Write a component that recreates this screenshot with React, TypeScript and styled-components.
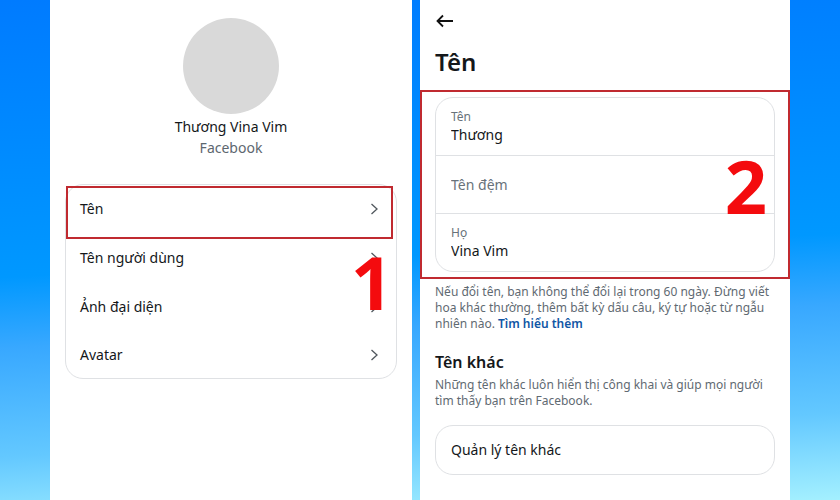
import React from "react";
import styled, { createGlobalStyle } from "styled-components";

const GlobalStyle = createGlobalStyle`
  *, *::before, *::after { box-sizing: border-box; }
  body {
    margin: 0;
    color: #14171a;
    font-family: "Noto Sans", sans-serif;
    font-size: 14px;
    line-height: 20px;
  }
  button, input { font: inherit; color: inherit; }
  h1, h2, p, ul { margin: 0; padding: 0; }
`;

const Page = styled.div`
  display: flex;
  gap: 8px;
  min-height: 100vh;
  padding: 0 50px;
  background: linear-gradient(177deg, #007bff 0%, #0098ff 51%, #38a8ff 64%, #63c8ff 84%, #a4f0ff 100%);
`;

const Panel = styled.section<{ $grow: number }>`
  flex: ${(p) => p.$grow} 1 0;
  min-width: 0;
  background: #fff;
`;

const Profile = styled.header`
  display: flex;
  flex-direction: column;
  align-items: center;
  padding: 18px 0 26px;
`;

const Avatar = styled.div`
  width: 96px;
  height: 96px;
  margin-bottom: 3px;
  border-radius: 50%;
  background: #d9d9d9;
`;

const Name = styled.p`
  font-size: 14px;
`;

const Network = styled.p`
  margin-top: 1px;
  color: #5d676f;
  font-size: 14px;
`;

const Card = styled.div`
  border: 1px solid #dfe1e4;
  border-radius: 18px;
`;

const Menu = styled(Card).attrs({ as: "ul" })`
  margin: 0 15px;
  list-style: none;
`;

const MenuButton = styled.button`
  display: flex;
  align-items: center;
  justify-content: space-between;
  width: 100%;
  height: 49px;
  padding: 0 15px 2px 14px;
  border: 0;
  background: none;
  text-align: left;
  cursor: pointer;
`;

const MenuItem = styled.li`
  position: relative;

  &:last-child ${MenuButton} {
    height: 46px;
    padding-bottom: 0;
  }
`;

const MenuHighlight = styled.div`
  position: absolute;
  inset: 1px 3px -5px 0;
  border: 2px solid #c02a30;
  pointer-events: none;
`;

const Step = styled.span`
  position: absolute;
  z-index: 1;
  color: #f40b0e;
  font: 700 74px/74px "Open Sans", sans-serif;
  pointer-events: none;
`;

const StepOne = styled(Step)`
  top: 60px;
  right: 3px;
`;

const StepTwo = styled(Step)`
  top: 57px;
  right: 21px;
`;

const TopBar = styled.header`
  padding: 11px 15px 0;
`;

const BackButton = styled.button`
  display: flex;
  padding: 0;
  border: 0;
  background: none;
  cursor: pointer;
`;

const Title = styled.h1`
  margin: 15px 0 13px;
  font-size: 24px;
  font-weight: 600;
  line-height: 31px;
`;

const NameFields = styled.form`
  position: relative;
  padding: 5px 13px;
  border: 2px solid #c02a30;
`;

const Field = styled.label`
  display: flex;
  flex-direction: column;
  justify-content: center;
  height: 57px;
  padding: 0 15px;

  & + & {
    height: 58px;
    border-top: 1px solid #dfe1e4;
  }
`;

const FieldLabel = styled.span`
  color: #68727a;
  font-size: 12px;
  line-height: 16px;
`;

const FieldInput = styled.input`
  width: 100%;
  height: 20px;
  padding: 0;
  border: 0;
  outline: 0;
  background: none;

  &::placeholder { color: #68727a; opacity: 1; }
`;

const Details = styled.div`
  padding: 5px 15px 0;
`;

const Note = styled.p`
  color: #5f6a72;
  font-size: 12px;
  line-height: 16px;
`;

const MoreLink = styled.a`
  color: #0f56a5;
  font-weight: 600;
  text-decoration: none;
`;

const Subtitle = styled.h2`
  margin: 18px 0 3px;
  font-size: 16px;
  font-weight: 600;
  line-height: 24px;
`;

const ManageButton = styled(Card).attrs({ as: "button", type: "button" })`
  width: 100%;
  height: 50px;
  margin-top: 16px;
  padding: 0 15px;
  background: none;
  text-align: left;
  cursor: pointer;
`;

const Chevron = () => (
  <svg width="12" height="14" viewBox="0 0 12 14" fill="none" stroke="#50575d" strokeWidth="1.3" aria-hidden="true">
    <path d="M2.5 2 L8 7 L2.5 12" />
  </svg>
);

const BackArrow = () => (
  <svg width="20" height="20" viewBox="0 0 20 20" fill="none" stroke="#111" strokeWidth="1.8" aria-hidden="true">
    <path d="M18 10 H3 M8 4.5 L2.5 10 L8 15.5" />
  </svg>
);

const menu = ["Tên", "Tên người dùng", "Ảnh đại diện", "Avatar"];

const fields = [
  { id: "first", label: "Tên", value: "Thương" },
  { id: "middle", label: "Tên đệm", value: "" },
  { id: "last", label: "Họ", value: "Vina Vim" },
];

export default function App() {
  return (
    <>
      <GlobalStyle />
      <Page>
        <Panel $grow={362}>
          <Profile>
            <Avatar />
            <Name>Thương Vina Vim</Name>
            <Network>Facebook</Network>
          </Profile>
          <Menu>
            {menu.map((item, index) => (
              <MenuItem key={item}>
                <MenuButton type="button">
                  {item}
                  <Chevron />
                </MenuButton>
                {index === 0 && (
                  <>
                    <MenuHighlight />
                    <StepOne>1</StepOne>
                  </>
                )}
              </MenuItem>
            ))}
          </Menu>
        </Panel>
        <Panel $grow={370}>
          <TopBar>
            <BackButton type="button" aria-label="Quay lại">
              <BackArrow />
            </BackButton>
            <Title>Tên</Title>
          </TopBar>
          <NameFields>
            <Card>
              {fields.map(({ id, label, value }) => (
                <Field key={id}>
                  {value && <FieldLabel>{label}</FieldLabel>}
                  <FieldInput name={id} defaultValue={value} placeholder={label} />
                </Field>
              ))}
            </Card>
            <StepTwo>2</StepTwo>
          </NameFields>
          <Details>
            <Note>
              Nếu đổi tên, bạn không thể đổi lại trong 60 ngày. Đừng viết hoa khác thường, thêm bất kỳ dấu câu, ký tự
              hoặc từ ngẫu nhiên nào. <MoreLink href="#more">Tìm hiểu thêm</MoreLink>
            </Note>
            <Subtitle>Tên khác</Subtitle>
            <Note>Những tên khác luôn hiển thị công khai và giúp mọi người tìm thấy bạn trên Facebook.</Note>
            <ManageButton>Quản lý tên khác</ManageButton>
          </Details>
        </Panel>
      </Page>
    </>
  );
}
